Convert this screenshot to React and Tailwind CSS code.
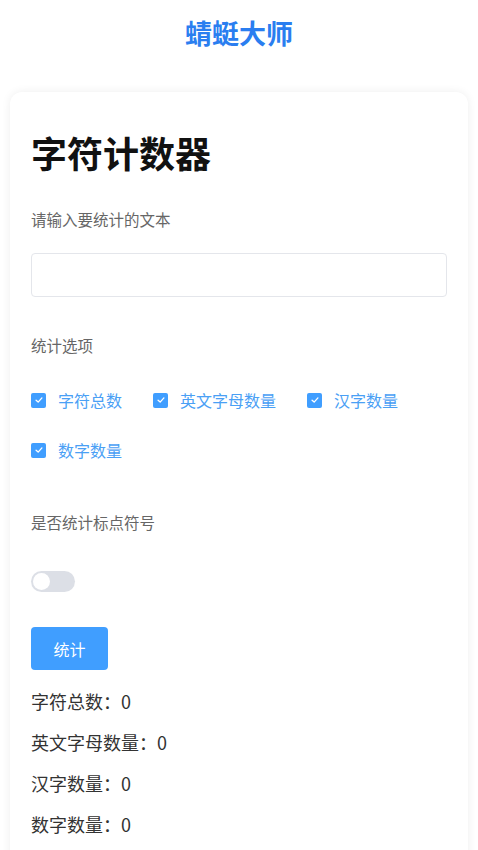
import React, { useState } from 'react'

const options = [
  { key: 'total', label: '字符总数' },
  { key: 'letters', label: '英文字母数量' },
  { key: 'hanzi', label: '汉字数量' },
  { key: 'digits', label: '数字数量' },
]

const Check = () => (
  <span className="flex h-[15px] w-[15px] items-center justify-center rounded-[2px] bg-[#409eff]">
    <svg viewBox="0 0 12 12" className="h-[10px] w-[10px]" fill="none" stroke="white" strokeWidth="1.6" strokeLinecap="round" strokeLinejoin="round">
      <path d="M2.5 6.2 5 8.5 9.5 3.5" />
    </svg>
  </span>
)

const App = () => {
  const [text, setText] = useState('')
  const [punct, setPunct] = useState(false)
  const [res, setRes] = useState({ total: 0, letters: 0, hanzi: 0, digits: 0 })

  const count = () => {
    const src = punct ? text : text.replace(/[\p{P}]/gu, '')
    setRes({
      total: src.length,
      letters: (text.match(/[a-zA-Z]/g) || []).length,
      hanzi: (text.match(/[\u4e00-\u9fa5]/g) || []).length,
      digits: (text.match(/[0-9]/g) || []).length,
    })
  }

  return (
    <div className="min-h-[850px] bg-white pb-4" style={{ fontFamily: '"Noto Sans CJK SC", "Noto Sans", sans-serif' }}>
      <div className="flex h-[66px] items-center justify-center">
        <h1 className="text-[27px] font-bold text-[#2a7ef0]">蜻蜓大师</h1>
      </div>

      <div className="mx-[10px] mt-[26px] rounded-[12px] bg-white px-[21px] pt-[35px] pb-6 shadow-[0_0_10px_rgba(0,0,0,0.07)]">
        <h2 className="text-[36px] leading-[50px] font-bold text-[#111]">字符计数器</h2>

        <p className="mt-[32px] text-[15.5px] leading-[20px] text-[#666]">请输入要统计的文本</p>
        <input
          value={text}
          onChange={(e) => setText(e.target.value)}
          className="mt-[24px] block h-[44px] w-full rounded-[4px] border border-[#e4e6eb] px-3 text-[15px] outline-none"
        />

        <p className="mt-[38px] text-[15.5px] leading-[20px] text-[#666]">统计选项</p>
        <div className="mt-[35px] flex flex-wrap gap-x-[31px] gap-y-[30px]">
          {options.map((o) => (
            <label key={o.key} className="flex h-[20px] items-center gap-[12px] text-[16px] text-[#4aa0f5]">
              <Check />
              <span>{o.label}</span>
            </label>
          ))}
        </div>

        <p className="mt-[52px] text-[15.5px] leading-[20px] text-[#666]">是否统计标点符号</p>
        <button
          onClick={() => setPunct(!punct)}
          className={`mt-[39px] flex h-[21px] w-[44px] items-center rounded-full px-[2px] ${punct ? 'justify-end bg-[#409eff]' : 'justify-start bg-[#dcdfe6]'}`}
        >
          <span className="h-[17px] w-[17px] rounded-full bg-white" />
        </button>

        <button
          onClick={count}
          className="mt-[35px] h-[43px] w-[77px] rounded-[4px] bg-[#409eff] text-[16px] text-white"
        >
          统计
        </button>

        <div className="mt-[11px] flex flex-col text-[18px] leading-[41px] text-[#333]">
          <p>字符总数：{res.total}</p>
          <p>英文字母数量：{res.letters}</p>
          <p>汉字数量：{res.hanzi}</p>
          <p>数字数量：{res.digits}</p>
        </div>
      </div>
    </div>
  )
}

export default App
